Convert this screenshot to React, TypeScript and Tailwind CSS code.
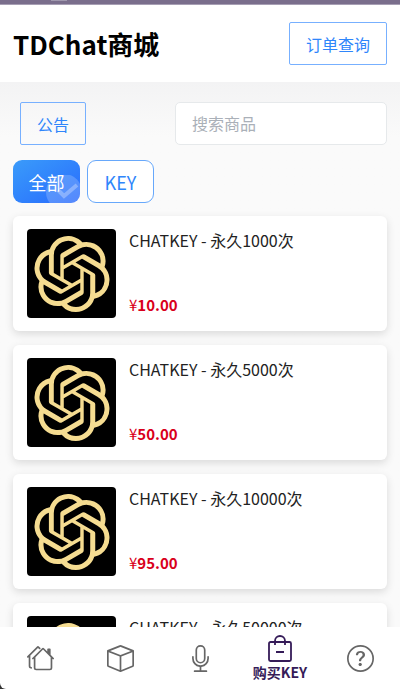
import { BsBox, BsHouses, BsMic, BsQuestionCircle } from "react-icons/bs";
import { SiOpenai } from "react-icons/si";

const products = [
  { name: "CHATKEY - 永久1000次", price: "10.00" },
  { name: "CHATKEY - 永久5000次", price: "50.00" },
  { name: "CHATKEY - 永久10000次", price: "95.00" },
  { name: "CHATKEY - 永久50000次", price: "450.00" },
];

function BagIcon() {
  return (
    <svg viewBox="0 0 26 28" className="h-7 w-[26px]" fill="none" stroke="currentColor" strokeWidth="1.8" aria-hidden="true">
      <rect x="2" y="7" width="22" height="19" rx="1.5" />
      <path d="M8 10V6a5 5 0 0 1 10 0v4M9 17h8" />
    </svg>
  );
}

function ProductCard({ name, price }: { name: string; price: string }) {
  return (
    <li className="flex gap-[13px] rounded-md bg-white px-[14px] py-[13px] shadow-[0_3px_8px_rgba(0,0,0,0.13)]">
      <div className="flex size-[89px] shrink-0 items-center justify-center rounded bg-black text-[#f5dc91]">
        <SiOpenai className="size-[76px]" aria-hidden="true" />
      </div>
      <div className="flex min-w-0 flex-1 flex-col justify-between">
        <h2 className="truncate text-base leading-[22px] text-[#222]">{name}</h2>
        <p className="text-[15px] leading-[26px] text-[#d9001b]">
          ¥<span className="font-bold">{price}</span>
        </p>
      </div>
    </li>
  );
}

export default function App() {
  return (
    <div className="flex h-screen flex-col bg-[#fafafa] font-['Noto_Sans_CJK_SC',sans-serif]">
      <div className="h-[5px] shrink-0 border-b border-[#a79fb4] bg-[#7a6e8c] pl-[51px]">
        <div className="h-px w-4 bg-[#a098ae]" />
      </div>
      <header className="flex h-[77px] shrink-0 items-center justify-between bg-white px-[13px]">
        <h1 className="text-[26px] leading-9 font-bold text-black">TDChat商城</h1>
        <button type="button" className="h-[43px] rounded-xs border border-[#77b0ff] px-4 text-base text-[#2f86fb]">
          订单查询
        </button>
      </header>

      <main className="min-h-0 flex-1 overflow-y-auto bg-linear-to-b from-[#f3f3f4] to-[#fafafa] to-10% px-[13px] pt-5 [scrollbar-width:none]">
        <div className="flex items-center justify-between pl-[7px]">
          <button type="button" className="h-[43px] rounded-xs border border-[#77b0ff] px-4 text-base text-[#2f86fb]">
            公告
          </button>
          <input
            type="text"
            aria-label="搜索商品"
            placeholder="搜索商品"
            className="h-[43px] w-[212px] rounded-[5px] border border-[#e6e9eb] bg-white px-4 pb-0.5 text-base outline-none placeholder:text-[#aab0b8]"
          />
        </div>

        <div className="mt-[15px] flex gap-[7px]">
          <button
            type="button"
            aria-pressed="true"
            className="relative h-[43px] w-[67px] overflow-hidden rounded-[9px] bg-linear-to-br from-[#3b9bfa] to-[#2b69fd] text-lg text-white"
          >
            <svg viewBox="0 0 34 28" className="absolute right-0 bottom-0 h-7 w-[34px]" aria-hidden="true">
              <circle cx="18" cy="17" r="18" fill="#fff" fillOpacity="0.2" />
              <path d="m12 15 6 6 13-11" fill="none" stroke="#fff" strokeOpacity="0.3" strokeWidth="4" />
            </svg>
            <span className="relative">全部</span>
          </button>
          <button
            type="button"
            aria-pressed="false"
            className="h-[43px] w-[67px] rounded-[9px] border border-[#67a8fb] bg-white text-lg text-[#2f86fb]"
          >
            KEY
          </button>
        </div>

        <ul className="mt-[13px] flex flex-col gap-[14px]">
          {products.map((product) => (
            <ProductCard key={product.name} name={product.name} price={product.price} />
          ))}
        </ul>
      </main>

      <div className="shrink-0 bg-[#333]">
        <nav className="grid h-[62px] grid-cols-5 rounded-bl-[6px] bg-white text-[#666]">
          <a href="#home" aria-label="首页" className="flex items-center justify-center">
            <BsHouses className="size-[27px]" />
          </a>
          <a href="#box" aria-label="应用" className="flex items-center justify-center">
            <BsBox className="size-[27px]" />
          </a>
          <a href="#voice" aria-label="语音" className="flex items-center justify-center">
            <BsMic className="size-[27px]" />
          </a>
          <a href="#buy" aria-current="page" className="flex flex-col items-center justify-center text-[#351b58]">
            <BagIcon />
            <span className="text-sm leading-[18px] font-bold">购买KEY</span>
          </a>
          <a href="#help" aria-label="帮助" className="flex items-center justify-center">
            <BsQuestionCircle className="size-[27px]" />
          </a>
        </nav>
      </div>
    </div>
  );
}
